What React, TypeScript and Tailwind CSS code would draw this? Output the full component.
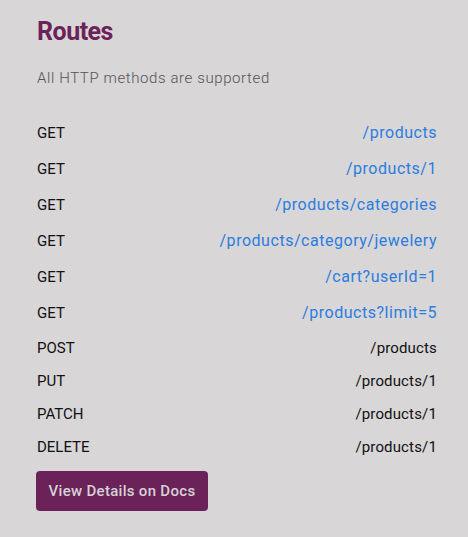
import React from "react";

const links = [
  "/products",
  "/products/1",
  "/products/categories",
  "/products/category/jewelery",
  "/cart?userId=1",
  "/products?limit=5",
];

const plain: [string, string][] = [
  ["POST", "/products"],
  ["PUT", "/products/1"],
  ["PATCH", "/products/1"],
  ["DELETE", "/products/1"],
];

export default function App() {
  return (
    <div
      className="w-[468px] h-[537px] bg-[#d8d6d7] pl-[37px] pr-[31px] pt-[17px]"
      style={{ fontFamily: "Roboto, 'Noto Sans', sans-serif" }}
    >
      <h1 className="text-[25px] leading-[30px] font-bold text-[#6b2259] tracking-[-0.02em]">
        Routes
      </h1>
      <p className="mt-[21px] text-[15px] leading-[20px] font-light text-[#555355] tracking-[0.04em]">
        All HTTP methods are supported
      </p>
      <div className="mt-[27px] flex flex-col">
        {links.map((l) => (
          <div key={l} className="h-9 flex items-center justify-between">
            <span className="text-[15px] text-[#111]">GET</span>
            <a className="text-[16px] text-[#2b7de0] tracking-[0.033em]">{l}</a>
          </div>
        ))}
        <div className="mt-px flex flex-col">
          {plain.map(([m, p]) => (
            <div key={m} className="h-[33px] flex items-center justify-between">
              <span className="text-[15px] text-[#111]">{m}</span>
              <span className="text-[15px] text-[#111] tracking-[0.01em]">{p}</span>
            </div>
          ))}
        </div>
      </div>
      <button className="mt-[7px] ml-[-1px] w-[172px] h-[40px] rounded-[4px] bg-[#6b2259] text-[#d6d1d5] text-[15px] font-medium tracking-[0.02em]">
        View Details on Docs
      </button>
    </div>
  );
}
